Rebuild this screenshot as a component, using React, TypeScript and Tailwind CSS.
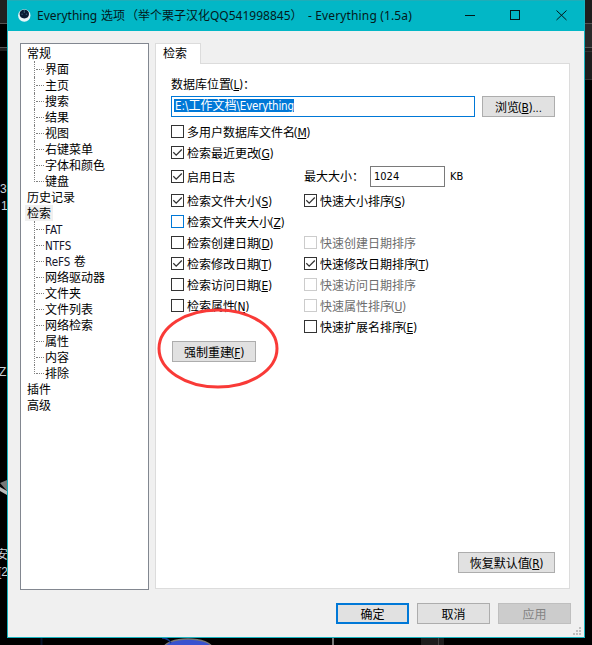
import type { ReactNode } from 'react'

interface TreeGroup {
    label: string
    children: string[]
}

interface CheckOption {
    label: string
    hotkey?: string
    checked?: boolean
    disabled?: boolean
    hover?: boolean
}

const treeGroups: TreeGroup[] = [
    {
        label: '常规',
        children: ['界面', '主页', '搜索', '结果', '视图', '右键菜单', '字体和颜色', '键盘'],
    },
    { label: '历史记录', children: [] },
    {
        label: '检索',
        children: ['FAT', 'NTFS', 'ReFS 卷', '网络驱动器', '文件夹', '文件列表', '网络检索', '属性', '内容', '排除'],
    },
    { label: '插件', children: [] },
    { label: '高级', children: [] },
]

const indexOptions: CheckOption[] = [
    { label: '检索文件大小', hotkey: 'S', checked: true },
    { label: '检索文件夹大小', hotkey: 'Z', hover: true },
    { label: '检索创建日期', hotkey: 'D' },
    { label: '检索修改日期', hotkey: 'T', checked: true },
    { label: '检索访问日期', hotkey: 'E' },
    { label: '检索属性', hotkey: 'N' },
]

const sortOptions: (CheckOption | null)[] = [
    { label: '快速大小排序', hotkey: 'S', checked: true },
    null,
    { label: '快速创建日期排序', disabled: true },
    { label: '快速修改日期排序', hotkey: 'T', checked: true },
    { label: '快速访问日期排序', disabled: true },
    { label: '快速属性排序', hotkey: 'U', disabled: true },
    { label: '快速扩展名排序', hotkey: 'E' },
]

function Hotkey({ letter }: { letter: string }) {
    return (
        <span className="-ml-[1.5px] text-[12px] tracking-[-0.35px]">
            (<span className="underline decoration-1 underline-offset-1">{letter}</span>)
        </span>
    )
}

function Cjk({ children }: { children: ReactNode }) {
    return <span className="text-[12px]">{children}</span>
}

function Checkbox({ label, hotkey, checked, disabled, hover }: CheckOption) {
    const border = disabled ? 'border-[#cccccc]' : hover ? 'border-[#0078d7]' : 'border-[#333333]'

    return (
        <div className={`flex h-[13px] items-center ${disabled ? 'text-[#6d6d6d]' : 'text-black'}`}>
            <span className={`mr-[3px] h-[13px] w-[13px] shrink-0 border bg-white ${border}`}>
                {checked && (
                    <svg viewBox="0 0 11 11" className="block h-[11px] w-[11px]" fill="none" stroke="#333333" strokeWidth="1.3">
                        <path d="M1.3 5.3 L4.2 8.2 L9.8 2.5" />
                    </svg>
                )}
            </span>
            <span className="whitespace-nowrap pt-[2px]">
                <Cjk>{label}</Cjk>
                {hotkey && <Hotkey letter={hotkey} />}
            </span>
        </div>
    )
}

function Button({ className, children }: { className: string; children: ReactNode }) {
    return (
        <button
            className={`flex h-[21px] shrink-0 items-center justify-center whitespace-nowrap ${className}`}
        >
            <span className="pt-[2px]">{children}</span>
        </button>
    )
}

function TitleBar() {
    return (
        <div className="flex h-[31px] shrink-0 items-center border-t border-[#1fadb8] bg-[#02b7c6] pl-[10px] font-['Noto_Sans','Noto_Sans_CJK_SC',sans-serif] text-[12px]">
            <svg viewBox="0 0 13 13" className="mb-[2px] h-[13px] w-[13px]">
                <circle cx="6.3" cy="6.5" r="6.2" fill="#e8f5f8" />
                <path d="M6.3 0.8 C9.5 0.8 11 2.6 11 5 C11 7.8 9.2 9.4 6.3 9.4 C3.4 9.4 1.6 7.8 1.6 5 C1.6 2.6 3.1 0.8 6.3 0.8Z" fill="#071c33" />
                <path d="M6.3 0.8 V4" stroke="#41657c" strokeWidth="1" />
                <circle cx="4.1" cy="5.2" r="0.8" fill="#35566f" />
                <circle cx="8.5" cy="5.2" r="0.8" fill="#35566f" />
            </svg>
            <div className="ml-[6px] flex whitespace-pre text-[#04191b]">
                <span className="w-[64px]">Everything</span>
                <span className="w-[25px]">选项</span>
                <span className="w-[182px]">（举个栗子汉化QQ541998845）</span>
                <span className="tracking-[0.14px]">- Everything (1.5a)</span>
            </div>
            <svg viewBox="0 0 104 12" className="mb-[2px] ml-auto mr-[16px] h-[12px] w-[104px]" fill="none" stroke="#03181a">
                <path d="M1 6.5 H11" />
                <rect x="46.5" y="1.5" width="9" height="9" />
                <path d="M92.5 1.5 L102.5 11 M102.5 1.5 L92.5 11" />
            </svg>
        </div>
    )
}

function TreeChild({ label, last }: { label: string; last: boolean }) {
    return (
        <div className="flex h-4">
            <div className={`w-[2px] border-l border-dotted border-[#808080] ${last ? 'h-[9px]' : 'h-4'}`} />
            <div className="mr-px mt-2 h-px w-2 border-t border-dotted border-[#808080]" />
            <span className="whitespace-nowrap leading-[18px]">
                {label.split(' ').map((part, i) => (
                    <span key={part} className={/^[A-Z]/.test(part) ? 'text-[11.5px] text-[#14142b]' : 'text-[12px]'}>
                        {i > 0 && ' '}
                        {part}
                    </span>
                ))}
            </span>
        </div>
    )
}

function OptionsTree() {
    return (
        <div className="h-[547px] w-[129px] shrink-0 border border-[#828790] bg-white pt-px">
            {treeGroups.map((group) => (
                <div key={group.label}>
                    <div className="ml-1 flex h-4">
                        <span
                            className={`h-4 px-[2px] text-[12px] leading-[18px] ${group.label === '检索' ? 'bg-[#f0f0f0]' : ''}`}
                        >
                            {group.label}
                        </span>
                    </div>
                    <div className="pl-[13px]">
                        {group.children.map((child, i) => (
                            <TreeChild key={child} label={child} last={i === group.children.length - 1} />
                        ))}
                    </div>
                </div>
            ))}
        </div>
    )
}

function IndexPage() {
    return (
        <div className="relative flex w-[415px] shrink-0 flex-col">
            <div className="flex h-[20px]">
                <div className="z-10 -mb-px flex w-[46px] items-center border border-b-0 border-[#dcdcdc] bg-white pl-[7px] text-[12px]">
                    检索
                </div>
            </div>
            <div className="flex h-[526px] flex-col border border-[#dcdcdc] bg-white pl-[15px] pr-[14px] pt-[13px]">
                <div className="h-4 leading-4">
                    <Cjk>数据库位置</Cjk>
                    <Hotkey letter="L" />
                    <Cjk>：</Cjk>
                </div>
                <div className="mt-[3px] flex justify-between">
                    <div className="flex h-[21px] w-[304px] items-start border border-[#0078d7] bg-white pl-[2px] pt-[2px]">
                        <div className="flex h-[13px] w-[120px] items-center whitespace-nowrap bg-[#0078d7] pl-px text-white">
                            <span className="pt-[2px]">
                                <span className="text-[11.5px]">E:\</span>
                                <Cjk>工作文档</Cjk>
                                <span className="text-[11.5px] tracking-[-0.2px]">\Everything</span>
                            </span>
                        </div>
                    </div>
                    <Button className="w-[73px] border border-[#adadad] bg-[#e1e1e1]">
                        <Cjk>浏览</Cjk>
                        <Hotkey letter="B" />...
                    </Button>
                </div>

                <div className="mt-2 flex flex-col gap-2">
                    <Checkbox label="多用户数据库文件名" hotkey="M" />
                    <Checkbox label="检索最近更改" hotkey="G" checked />
                </div>

                <div className="mt-[7px] flex h-[21px] items-center">
                    <div className="w-[133px]">
                        <Checkbox label="启用日志" checked />
                    </div>
                    <span className="w-[66px] pt-px text-[12px]">最大大小：</span>
                    <div className="flex h-[21px] w-[75px] items-center border border-[#7a7a7a] bg-white pl-[3px]">
                        1024
                    </div>
                    <span className="ml-[5px]">KB</span>
                </div>

                <div className="mt-[7px] flex">
                    <div className="flex w-[133px] flex-col gap-2">
                        {indexOptions.map((option) => (
                            <Checkbox key={option.label} {...option} />
                        ))}
                    </div>
                    <div className="flex flex-col gap-2">
                        {sortOptions.map((option, i) =>
                            option ? <Checkbox key={option.label} {...option} /> : <div key={i} className="h-[13px]" />
                        )}
                    </div>
                </div>

                <Button className="ml-px mt-2 w-[84px] border border-[#adadad] bg-[#e1e1e1]">
                    <Cjk>强制重建</Cjk>
                    <Hotkey letter="F" />
                </Button>
                <Button className="mb-[15px] ml-auto mt-auto w-[97px] border border-[#adadad] bg-[#e1e1e1]">
                    <Cjk>恢复默认值</Cjk>
                    <Hotkey letter="R" />
                </Button>
            </div>

            {/* hand drawn marker around the rebuild button */}
            <svg viewBox="0 0 122 82" className="absolute left-[2px] top-[264px] h-[82px] w-[122px]" fill="none">
                <ellipse cx="61" cy="41.5" rx="59" ry="38.5" stroke="#f93a37" strokeWidth="3" />
            </svg>
        </div>
    )
}

function SizeGrip() {
    return (
        <svg viewBox="0 0 8 8" className="absolute bottom-[2px] right-[3px] h-2 w-2" fill="#bfbfbf">
            <path d="M6 0h2v2h-2z M3 3h2v2h-2z M6 3h2v2h-2z M0 6h2v2h-2z M3 6h2v2h-2z M6 6h2v2h-2z" />
        </svg>
    )
}

function Desktop() {
    return (
        <svg viewBox="0 0 592 645" className="absolute inset-0 h-[645px] w-[592px]">
            <rect width="592" height="645" fill="#000000" />
            <rect width="8" height="23" fill="#202020" />
            <path d="M0 23.5 H8 M0 47.5 H8" stroke="#555555" />
            <rect y="48" width="8" height="3" fill="#202020" />
            <rect x="584" width="8" height="79" fill="#1d1d1d" />
            <rect x="584" y="24" width="8" height="23" fill="#292929" />
            <path d="M584 23.5 H592 M584 47.5 H592" stroke="#555555" />
            <path d="M584 51.5 H592 M584 79.5 H592" stroke="#333333" />
            <path d="M0 483 L7 480 V491 Z" fill="#777777" />
            <path d="M0 487 L7 491 V495 L0 491 Z" fill="#bbbbbb" />
            <g fill="#c8d0d8" fontSize="12" fontFamily="'Liberation Sans', 'Noto Sans CJK SC', sans-serif">
                <text x="0" y="193">3</text>
                <text x="1" y="210">1</text>
                <text x="-1" y="376">Z</text>
                <text x="-4" y="559">安</text>
                <text x="-2" y="576">[2</text>
            </g>
            <path d="M41.5 638 V645" stroke="#07152c" strokeWidth="2" />
            <ellipse cx="188" cy="648" rx="24" ry="9" fill="#3852cf" stroke="#777777" strokeWidth="1.5" />
            <path d="M162 638 Q168 638 171 643" stroke="#173a87" strokeWidth="1.5" fill="none" />
            <path d="M333 638 V645" stroke="#777777" strokeWidth="2" />
            <rect x="421" y="638" width="23" height="7" fill="#1d1d1d" />
            <path d="M438.5 638 V645" stroke="#444444" />
        </svg>
    )
}

export default function App() {
    return (
        <div className="relative h-[645px] w-[592px] overflow-hidden bg-black font-['DejaVu_Sans_Condensed','Noto_Sans_CJK_SC',sans-serif] text-[11px] leading-none text-black">
            <Desktop />
            <div className="relative ml-[7px] flex h-[638px] w-[578px] flex-col border border-t-0 border-[#18b4c0] bg-[#f0f0f0]">
                <TitleBar />
                <div className="flex gap-[6px] pl-[12px] pt-[12px]">
                    <OptionsTree />
                    <IndexPage />
                </div>
                <div className="mt-[13px] flex justify-end gap-2 pr-[13px]">
                    <Button className="w-[73px] border-2 border-[#0078d7] bg-[#e1e1e1] text-[12px]">确定</Button>
                    <Button className="w-[73px] border border-[#adadad] bg-[#e1e1e1] text-[12px]">取消</Button>
                    <Button className="w-[73px] border border-[#bfbfbf] bg-[#cccccc] text-[12px] text-[#838383]">
                        应用
                    </Button>
                </div>
                <SizeGrip />
            </div>
        </div>
    )
}
